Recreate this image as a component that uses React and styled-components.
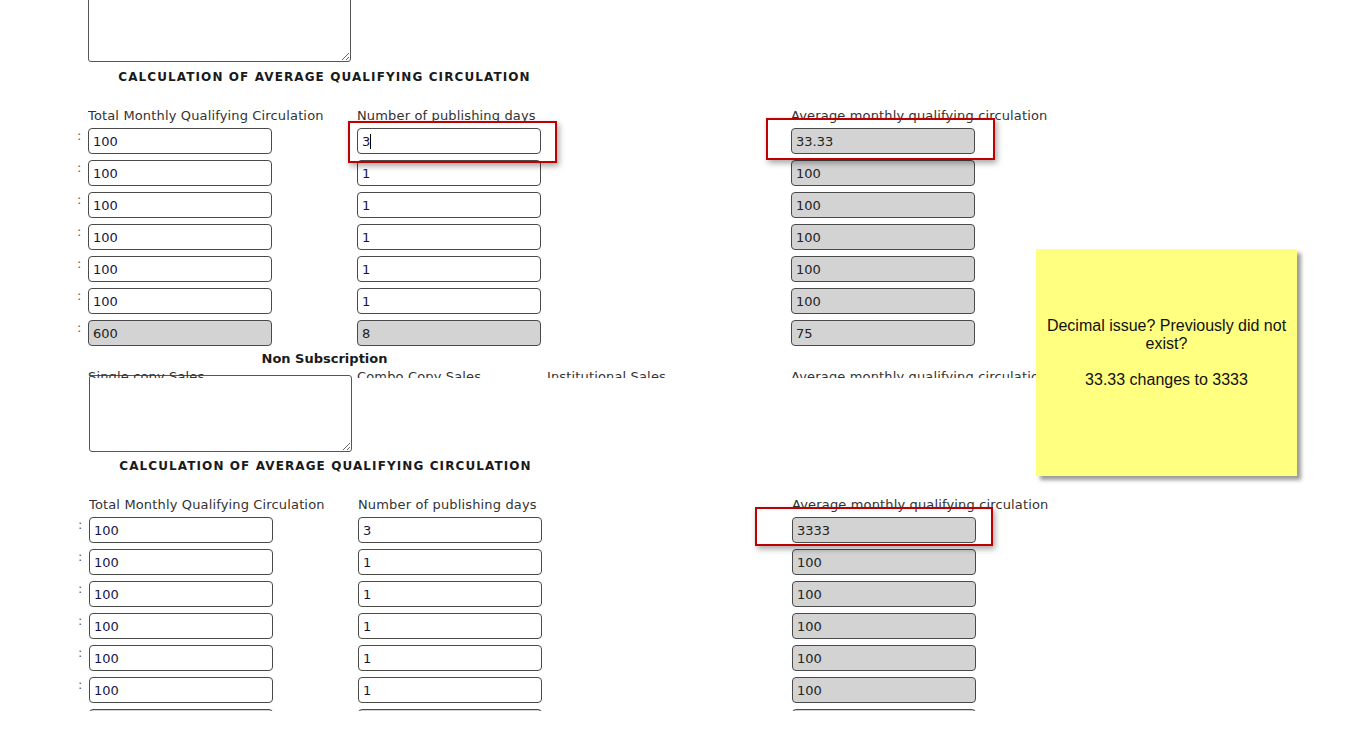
import React from 'react';
import styled, { createGlobalStyle } from 'styled-components';

const GlobalStyle = createGlobalStyle`
  body {
    margin: 0;
    background: #fff;
    font-family: 'DejaVu Sans', Verdana, sans-serif;
  }
`;

const rows = [
  ['100', '1', '100'],
  ['100', '1', '100'],
  ['100', '1', '100'],
  ['100', '1', '100'],
  ['100', '1', '100'],
];

const Page = styled.div`
  position: relative;
  width: 1345px;
  height: 751px;
  overflow: hidden;
`;

const Form = styled.div`
  height: 711px;
  overflow: hidden;
  padding-left: 76px;
`;

const Block = styled.div`
  margin-left: ${({ $shift }) => $shift || 0}px;
  margin-top: ${({ $top }) => $top || 0}px;
`;

const Notes = styled.textarea`
  display: block;
  box-sizing: border-box;
  margin: 0 0 0 12px;
  width: 263px;
  height: 77px;
  border: 1px solid #555;
  border-radius: 3px;
  background: #fff;
`;

const Heading = styled.div`
  width: 473px;
  margin: ${({ $gap }) => $gap}px 0 0 12px;
  text-align: center;
  font-size: 12px;
  line-height: 15px;
  font-weight: bold;
  letter-spacing: 1.1px;
  color: #1a1a1a;
`;

const Grid = styled.div`
  display: grid;
  grid-template-columns: 12px 269px 434px 260px;
`;

const LabelRow = styled(Grid)`
  margin-top: 23px;
`;

const Label = styled.div`
  grid-column: ${({ $col }) => $col};
  font-size: 13px;
  line-height: 15px;
  letter-spacing: 0.15px;
  color: #333;
  white-space: nowrap;
  overflow: hidden;
`;

const Rows = styled.div`
  margin-top: 5px;
  display: flex;
  flex-direction: column;
  gap: 6px;
`;

const Colon = styled.div`
  padding-left: 1px;
  font-size: 13px;
  line-height: 15px;
  color: #4f5f6f;
`;

const Cell = styled.div`
  position: relative;
`;

const Field = styled.input`
  display: block;
  box-sizing: border-box;
  width: 184px;
  height: 26px;
  margin: 0;
  padding: 0 4px;
  border: 1px solid #4a4a4a;
  border-radius: 4px;
  background: ${({ $grey }) => ($grey ? '#d3d3d3' : '#fff')};
  color: ${({ $grey }) => ($grey ? '#222' : '#14144a')};
  font-family: 'DejaVu Sans', Verdana, sans-serif;
  font-size: 13px;
  outline: none;
`;

const Caret = styled.span`
  position: absolute;
  left: 13px;
  top: 6px;
  width: 1px;
  height: 15px;
  background: #000;
`;

const SubTitle = styled.div`
  width: 473px;
  margin: 5px 0 0 12px;
  text-align: center;
  font-size: 13px;
  line-height: 15px;
  font-weight: bold;
  color: #1a1a1a;
`;

const Strip = styled.div`
  display: grid;
  grid-template-columns: 12px 269px 190px 244px 260px;
  height: 9px;
  margin-top: 3px;
  margin-bottom: -3px;
  overflow: hidden;
`;

const StripLabel = styled.div`
  grid-column: ${({ $col }) => $col};
  font-size: 13px;
  line-height: 15px;
  letter-spacing: 0.15px;
  color: #333;
  white-space: nowrap;
`;

const Mark = styled.div`
  position: absolute;
  left: ${({ $x }) => $x}px;
  top: ${({ $y }) => $y}px;
  width: ${({ $w }) => $w}px;
  height: ${({ $h }) => $h}px;
  box-sizing: border-box;
  border: 2px solid #c00000;
  box-shadow: 2px 3px 6px rgba(0, 0, 0, 0.35);
  pointer-events: none;
`;

const Sticky = styled.div`
  position: absolute;
  left: 1036px;
  top: 249px;
  width: 261px;
  height: 227px;
  box-sizing: border-box;
  padding: 68px 10px 0;
  background: #ffff80;
  box-shadow: 4px 4px 4px rgba(0, 0, 0, 0.4);
  font-family: 'Liberation Sans', Arial, sans-serif;
  font-size: 16px;
  line-height: 18px;
  color: #111;
  text-align: center;
`;

const Para = styled.p`
  margin: 0 0 18px;
`;

const CalcBlock = ({ shift, top, gap, result, caret }) => {
  const data = [['100', '3', result], ...rows];
  return (
    <Block $shift={shift} $top={top}>
      <Notes />
      <Heading $gap={gap}>CALCULATION OF AVERAGE QUALIFYING CIRCULATION</Heading>
      <LabelRow>
        <Label $col={2}>Total Monthly Qualifying Circulation</Label>
        <Label $col={3}>Number of publishing days</Label>
        <Label $col={4}>Average monthly qualifying circulation</Label>
      </LabelRow>
      <Rows>
        {data.map((r, i) => (
          <Grid key={i}>
            <Colon>:</Colon>
            <Field readOnly value={r[0]} />
            <Cell>
              <Field readOnly value={r[1]} />
              {i === 0 && caret && <Caret />}
            </Cell>
            <Field readOnly $grey value={r[2]} />
          </Grid>
        ))}
        <Grid>
          <Colon>:</Colon>
          <Field readOnly $grey value="600" />
          <Field readOnly $grey value="8" />
          <Field readOnly $grey value="75" />
        </Grid>
      </Rows>
    </Block>
  );
};

const App = () => (
  <Page>
    <GlobalStyle />
    <Form>
      <CalcBlock shift={0} top={-15} gap={8} result="33.33" caret />
      <SubTitle>Non Subscription</SubTitle>
      <Strip>
        <StripLabel $col={2}>Single copy Sales</StripLabel>
        <StripLabel $col={3}>Combo Copy Sales</StripLabel>
        <StripLabel $col={4}>Institutional Sales</StripLabel>
        <StripLabel $col={5}>Average monthly qualifying circulation</StripLabel>
      </Strip>
      <CalcBlock shift={1} top={0} gap={7} result="3333" />
    </Form>
    <Mark $x={348} $y={121} $w={209} $h={42} />
    <Mark $x={766} $y={118} $w={229} $h={42} />
    <Mark $x={755} $y={507} $w={238} $h={39} />
    <Sticky>
      <Para>Decimal issue? Previously did not exist?</Para>
      <Para>33.33 changes to 3333</Para>
    </Sticky>
  </Page>
);

export default App;
